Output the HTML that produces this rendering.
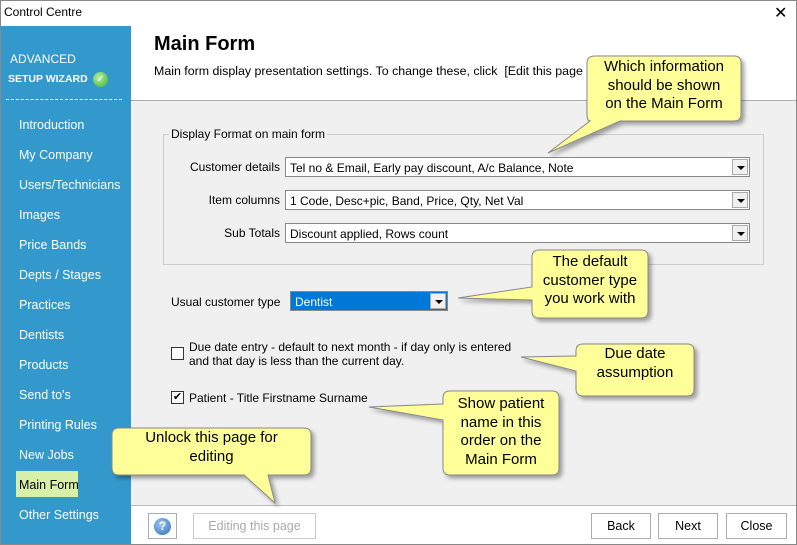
<!DOCTYPE html>
<html><head><meta charset="utf-8"><style>
*{margin:0;padding:0;box-sizing:border-box}
body{width:797px;height:545px;position:relative;background:#fff;font-family:"Liberation Sans",sans-serif;font-size:12px;color:#000;overflow:hidden}
.a{position:absolute}
#win{left:0;top:0;width:797px;height:545px;border:1px solid #888}
#side{left:1px;top:26px;width:130px;height:518px;background:#3399cc;color:#fff}
.nav{position:absolute;left:18px;font-size:12.5px;color:#fff}
#gray{left:131px;top:100px;width:665px;height:405px;background:#f0f0f0;border-top:1px solid #aaa}
#foot{left:131px;top:505px;width:665px;height:39px;background:#fff;border-top:1px solid #bbb}
.dd{position:absolute;height:20px;background:#fff;border:1px solid #888;font-size:12px;padding:3px 4px 0}
.arr{position:absolute;right:1px;top:1px;width:16px;height:16px;background:#f0f0f0;border:1px solid #aaa}
.arr:after{content:"";position:absolute;left:4px;top:6px;border-left:4px solid transparent;border-right:4px solid transparent;border-top:4px solid #000}
.lbl{position:absolute;font-size:12px;text-align:right}
.btn{position:absolute;top:513px;height:26px;border:1px solid #adadad;background:#fff;text-align:center;line-height:24px;font-size:12.5px}
.ct{position:absolute;font-family:"Liberation Sans",sans-serif;font-size:15px;text-align:center;line-height:18.5px;color:#000}
.cb{position:absolute;width:13px;height:13px;border:1px solid #333;background:#fff}
</style></head><body>
<div class="a" id="win"></div>
<div class="a" style="left:4px;top:5px;font-size:12px">Control Centre</div>
<div class="a" style="left:774px;top:3px;font-size:16px">✕</div>
<div class="a" id="side">
 <div class="a" style="left:9px;top:26px;font-size:12px">ADVANCED</div>
 <div class="a" style="left:7px;top:47px;font-size:10.5px;font-weight:bold">SETUP WIZARD</div>
 <div class="a" style="left:92px;top:46px;width:15px;height:15px;border-radius:50%;background:radial-gradient(circle at 40% 35%,#b8f0a0,#3cb030);color:#fff;font-size:10px;text-align:center;line-height:15px">✓</div>
 <div class="a" style="left:5px;top:73px;width:116px;border-top:1px dashed #fff"></div>
 <div class="nav" style="top:92px">Introduction</div>
 <div class="nav" style="top:122px">My Company</div>
 <div class="nav" style="top:152px">Users/Technicians</div>
 <div class="nav" style="top:182px">Images</div>
 <div class="nav" style="top:212px">Price Bands</div>
 <div class="nav" style="top:242px">Depts / Stages</div>
 <div class="nav" style="top:272px">Practices</div>
 <div class="nav" style="top:302px">Dentists</div>
 <div class="nav" style="top:332px">Products</div>
 <div class="nav" style="top:362px">Send to's</div>
 <div class="nav" style="top:392px">Printing Rules</div>
 <div class="nav" style="top:422px">New Jobs</div>
 <div class="a" style="left:15px;top:445px;width:62px;height:26px;background:#d8f0a8"></div>
 <div class="nav" style="top:452px;color:#000">Main Form</div>
 <div class="nav" style="top:482px">Other Settings</div>
</div>
<div class="a" style="left:154px;top:33px;font-size:20px;font-weight:bold">Main Form</div>
<div class="a" style="left:154px;top:64px;font-size:12.4px;white-space:nowrap">Main form display presentation settings. To change these, click &nbsp;[Edit this page</div>
<div class="a" id="gray"></div>
<div class="a" style="left:163px;top:134px;width:601px;height:131px;border:1px solid #ccc"></div>
<div class="a" style="left:169px;top:127px;background:#f0f0f0;padding:0 2px;font-size:12px">Display Format on main form</div>
<div class="lbl" style="left:150px;width:130px;top:160px">Customer details</div>
<div class="lbl" style="left:150px;width:130px;top:193px">Item columns</div>
<div class="lbl" style="left:150px;width:130px;top:226px">Sub Totals</div>
<div class="dd" style="left:285px;top:157px;width:465px">Tel no &amp; Email, Early pay discount, A/c Balance, Note<div class="arr"></div></div>
<div class="dd" style="left:285px;top:190px;width:465px">1 Code, Desc+pic, Band, Price, Qty, Net Val<div class="arr"></div></div>
<div class="dd" style="left:285px;top:223px;width:465px">Discount applied, Rows count<div class="arr"></div></div>
<div class="a" style="left:171px;top:295px;font-size:12px">Usual customer type</div>
<div class="dd" style="left:290px;top:291px;width:158px;background:#0078d7;color:#fff;border-color:#888">Dentist<div class="arr"></div></div>
<div class="cb" style="left:171px;top:347px"></div>
<div class="a" style="left:189px;top:340px;font-size:12px;line-height:14px">Due date entry - default to next month - if day only is entered<br>and that day is less than the current day.</div>
<div class="cb" style="left:171px;top:391px;font-size:11px;line-height:11px;text-align:center">✔</div>
<div class="a" style="left:189px;top:391px;font-size:12px">Patient - Title Firstname Surname</div>
<div class="a" id="foot"></div>
<div class="a" style="left:148px;top:513px;width:29px;height:26px;border:1px solid #adadad;background:#fff"><div style="margin:4px auto;width:17px;height:17px;border-radius:50%;background:radial-gradient(circle at 40% 35%,#9cc8f0,#2a6ac0);color:#fff;font-weight:bold;font-size:12px;text-align:center;line-height:17px">?</div></div>
<div class="btn" style="left:193px;width:123px;color:#aaa;border-color:#ccc">Editing this page</div>
<div class="btn" style="left:591px;width:60px">Back</div>
<div class="btn" style="left:658px;width:60px">Next</div>
<div class="btn" style="left:726px;width:61px">Close</div>
<svg class="a" style="left:0;top:0" width="797" height="545">
<defs><filter id="s" x="-20%" y="-20%" width="140%" height="140%"><feDropShadow dx="3" dy="3" stdDeviation="2" flood-color="#000" flood-opacity="0.35"/></filter></defs>
<g fill="#ffff99" stroke="#888" stroke-width="1" filter="url(#s)">
<path d="M595,56 H734 Q741,56 741,63 V114 Q741,121 734,121 H620 L548,153 L590,121 Q587,121 587,114 V63 Q587,56 595,56Z"/>
<path d="M539,250 H641 Q648,250 648,257 V311 Q648,318 641,318 H539 Q532,318 532,311 V300 L458,298 L532,287 V257 Q532,250 539,250Z"/>
<path d="M583,344 H687 Q694,344 694,351 V389 Q694,396 687,396 H583 Q576,396 576,389 V371 L521,357 L576,356 V351 Q576,344 583,344Z"/>
<path d="M450,391 H552 Q559,391 559,398 V468 Q559,475 552,475 H450 Q443,475 443,468 V420 L369,407 L443,404 V398 Q443,391 450,391Z"/>
<path d="M119,428 H304 Q311,428 311,435 V468 Q311,475 304,475 H268 L275,503 L244,475 H119 Q112,475 112,468 V435 Q112,428 119,428Z"/>
</g></svg>
<div class="ct" style="left:587px;top:58px;width:154px">Which information<br>should be shown<br>on the Main Form</div>
<div class="ct" style="left:532px;top:253px;width:116px">The default<br>customer type<br>you work with</div>
<div class="ct" style="left:576px;top:345px;width:118px">Due date<br>assumption</div>
<div class="ct" style="left:443px;top:395px;width:116px">Show patient<br>name in this<br>order on the<br>Main Form</div>
<div class="ct" style="left:112px;top:429px;width:199px">Unlock this page for<br>editing</div>
</body></html>
